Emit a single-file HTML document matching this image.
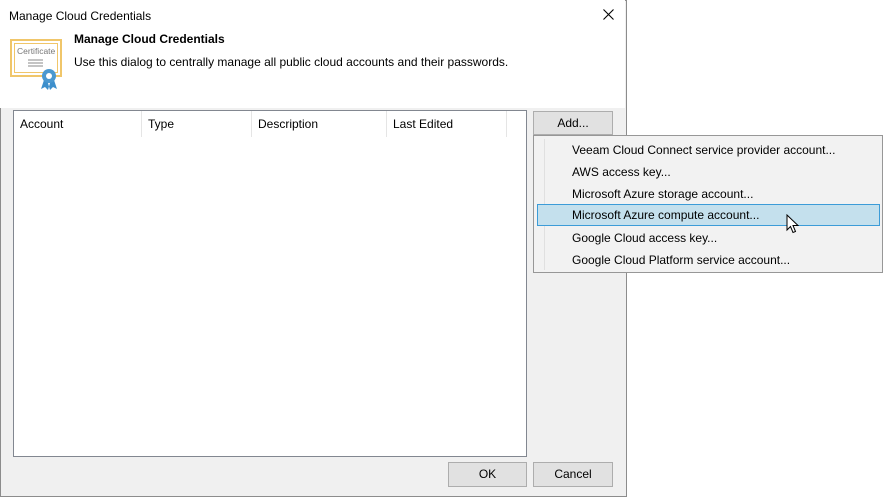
<html><head><style>
body{margin:0;width:883px;height:497px;background:#fff;font-family:"Liberation Sans",sans-serif;font-size:12px;color:#000;position:relative;overflow:hidden}
.a{position:absolute}
.dlg{left:0;top:0;width:625px;height:495px;border:1px solid #8c8c8c;background:#f0f0f0}
.hdr{left:0;top:0;width:625px;height:108px;background:#fff}
.btn{background:#e1e1e1;border:1px solid #adadad;text-align:center;line-height:22px;box-sizing:border-box}
.col{top:0;height:26px;line-height:27px;border-right:1px solid #e5e5e5;padding-left:6px;box-sizing:border-box}
.mi{left:38px;height:22px;line-height:22px}
</style></head><body>
<div class="a dlg"></div>
<div class="a hdr"></div>
<div class="a" style="left:9px;top:9px">Manage Cloud Credentials</div>
<svg class="a" style="left:603px;top:9px" width="11" height="11"><path d="M0.5 0.5L10.5 10.5M10.5 0.5L0.5 10.5" stroke="#000" stroke-width="1.1"/></svg>
<svg class="a" style="left:10px;top:38px" width="52" height="52">
<rect x="1" y="2" width="50" height="36" fill="#fff" stroke="#f0c66a" stroke-width="2"/>
<rect x="4.5" y="5.5" width="43" height="29" fill="none" stroke="#f0c66a" stroke-width="1"/>
<text x="7" y="16" font-size="8.5" fill="#777" font-family="Liberation Sans">Certificate</text>
<line x1="18" y1="22" x2="33" y2="22" stroke="#888"/><line x1="18" y1="25" x2="33" y2="25" stroke="#888"/><line x1="18" y1="28" x2="33" y2="28" stroke="#888"/>
<path d="M34 42 L31 51 L35 49 L38 52 L40 45 Z M44 42 L47 51 L43 49 L40 52 L38 45 Z" fill="#3d8fcc"/>
<circle cx="39" cy="38" r="7" fill="#4a98d0"/><circle cx="39" cy="38" r="3" fill="#fff"/>
</svg>
<div class="a" style="left:74px;top:32px;font-weight:bold">Manage Cloud Credentials</div>
<div class="a" style="left:74px;top:55px">Use this dialog to centrally manage all public cloud accounts and their passwords.</div>
<div class="a" style="left:13px;top:110px;width:514px;height:347px;background:#fff;border:1px solid #828790;box-sizing:border-box">
<div class="a col" style="left:0;width:128px">Account</div>
<div class="a col" style="left:128px;width:110px">Type</div>
<div class="a col" style="left:238px;width:135px">Description</div>
<div class="a col" style="left:373px;width:120px">Last Edited</div>
</div>
<div class="a btn" style="left:533px;top:111px;width:80px;height:24px">Add...</div>
<div class="a" style="left:533px;top:135px;width:350px;height:138px;background:#f2f2f2;border:1px solid #979797;box-sizing:border-box">
<div class="a" style="left:10px;top:3px;width:1px;height:131px;background:#e0e0e0"></div>
<div class="a mi" style="top:3px">Veeam Cloud Connect service provider account...</div>
<div class="a mi" style="top:25px">AWS access key...</div>
<div class="a mi" style="top:47px">Microsoft Azure storage account...</div>
<div class="a" style="left:3px;top:68px;width:343px;height:22px;background:#c4e0ed;border:1px solid #3c9cd8;box-sizing:border-box"></div>
<div class="a mi" style="top:68px">Microsoft Azure compute account...</div>
<div class="a mi" style="top:91px">Google Cloud access key...</div>
<div class="a mi" style="top:113px">Google Cloud Platform service account...</div>
</div>
<svg class="a" style="left:786px;top:214px" width="14" height="22"><path d="M1 1 L1 16 L4.5 12.5 L7 18.5 L9.5 17.5 L7 11.5 L12 11.5 Z" fill="#fff" stroke="#000" stroke-width="1"/></svg>
<div class="a btn" style="left:448px;top:462px;width:79px;height:25px;line-height:23px">OK</div>
<div class="a btn" style="left:533px;top:462px;width:80px;height:25px;line-height:23px">Cancel</div>
</body></html>
